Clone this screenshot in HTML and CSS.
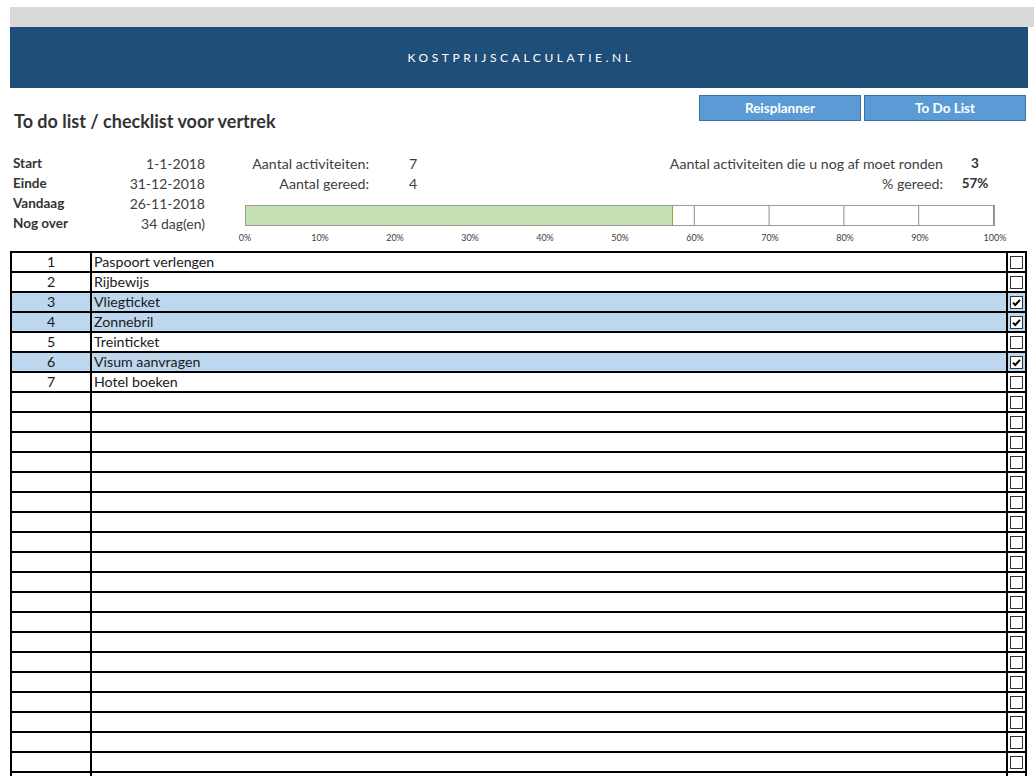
FILE: index.html
```html
<!DOCTYPE html>
<html lang="nl">
<head>
<meta charset="utf-8">
<title>To do list</title>
<link rel="stylesheet" href="styles.css">
</head>
<body>
<div class="topbar"></div>
<header class="banner">KOSTPRIJSCALCULATIE.NL</header>

<div class="subheader">
  <h1 class="title">To do list / checklist voor vertrek</h1>
  <nav class="buttons">
    <a class="btn">Reisplanner</a>
    <a class="btn">To Do List</a>
  </nav>
</div>

<section class="info">
  <div class="dates">
    <div class="lbl">Start</div><div class="val">1-1-2018</div>
    <div class="lbl">Einde</div><div class="val">31-12-2018</div>
    <div class="lbl">Vandaag</div><div class="val">26-11-2018</div>
    <div class="lbl">Nog over</div><div class="val">34 dag(en)</div>
  </div>
  <div class="progress">
    <div class="stats">
      <div class="slbl">Aantal activiteiten:</div><div class="sval">7</div>
      <div class="rlbl">Aantal activiteiten die u nog af moet ronden</div><div class="rval">3</div>
      <div class="slbl">Aantal gereed:</div><div class="sval">4</div>
      <div class="rlbl">% gereed:</div><div class="rval">57%</div>
    </div>
    <div class="chart">
      <div class="bar"><div class="fill" style="width:57.14%"></div></div>
      <div class="axis">
        <span>0%</span><span>10%</span><span>20%</span><span>30%</span><span>40%</span><span>50%</span><span>60%</span><span>70%</span><span>80%</span><span>90%</span><span>100%</span>
      </div>
    </div>
  </div>
</section>

<table class="todo">
  <colgroup><col class="c-num"><col class="c-text"><col class="c-chk"></colgroup>
  <tbody>
    <tr><td class="num">1</td><td class="txt">Paspoort verlengen</td><td class="chk"><span class="box"></span></td></tr>
    <tr><td class="num">2</td><td class="txt">Rijbewijs</td><td class="chk"><span class="box"></span></td></tr>
    <tr class="done"><td class="num">3</td><td class="txt">Vliegticket</td><td class="chk"><span class="box"><svg viewBox="0 0 11 11"><path d="M2 5.6 L4.3 8 L9 2.8" /></svg></span></td></tr>
    <tr class="done"><td class="num">4</td><td class="txt">Zonnebril</td><td class="chk"><span class="box"><svg viewBox="0 0 11 11"><path d="M2 5.6 L4.3 8 L9 2.8" /></svg></span></td></tr>
    <tr><td class="num">5</td><td class="txt">Treinticket</td><td class="chk"><span class="box"></span></td></tr>
    <tr class="done"><td class="num">6</td><td class="txt">Visum aanvragen</td><td class="chk"><span class="box"><svg viewBox="0 0 11 11"><path d="M2 5.6 L4.3 8 L9 2.8" /></svg></span></td></tr>
    <tr><td class="num">7</td><td class="txt">Hotel boeken</td><td class="chk"><span class="box"></span></td></tr>
    <tr><td class="num"></td><td class="txt"></td><td class="chk"><span class="box"></span></td></tr>
    <tr><td class="num"></td><td class="txt"></td><td class="chk"><span class="box"></span></td></tr>
    <tr><td class="num"></td><td class="txt"></td><td class="chk"><span class="box"></span></td></tr>
    <tr><td class="num"></td><td class="txt"></td><td class="chk"><span class="box"></span></td></tr>
    <tr><td class="num"></td><td class="txt"></td><td class="chk"><span class="box"></span></td></tr>
    <tr><td class="num"></td><td class="txt"></td><td class="chk"><span class="box"></span></td></tr>
    <tr><td class="num"></td><td class="txt"></td><td class="chk"><span class="box"></span></td></tr>
    <tr><td class="num"></td><td class="txt"></td><td class="chk"><span class="box"></span></td></tr>
    <tr><td class="num"></td><td class="txt"></td><td class="chk"><span class="box"></span></td></tr>
    <tr><td class="num"></td><td class="txt"></td><td class="chk"><span class="box"></span></td></tr>
    <tr><td class="num"></td><td class="txt"></td><td class="chk"><span class="box"></span></td></tr>
    <tr><td class="num"></td><td class="txt"></td><td class="chk"><span class="box"></span></td></tr>
    <tr><td class="num"></td><td class="txt"></td><td class="chk"><span class="box"></span></td></tr>
    <tr><td class="num"></td><td class="txt"></td><td class="chk"><span class="box"></span></td></tr>
    <tr><td class="num"></td><td class="txt"></td><td class="chk"><span class="box"></span></td></tr>
    <tr><td class="num"></td><td class="txt"></td><td class="chk"><span class="box"></span></td></tr>
    <tr><td class="num"></td><td class="txt"></td><td class="chk"><span class="box"></span></td></tr>
    <tr><td class="num"></td><td class="txt"></td><td class="chk"><span class="box"></span></td></tr>
    <tr><td class="num"></td><td class="txt"></td><td class="chk"><span class="box"></span></td></tr>
    <tr><td class="num"></td><td class="txt"></td><td class="chk"><span class="box"></span></td></tr>
  </tbody>
</table>
</body>
</html>
```

FILE: styles.css
```css
html, body {
  margin: 0;
  padding: 0;
  background: #ffffff;
}
body {
  height: 776px;
  overflow: hidden;
  font-family: "Lato", "Open Sans", sans-serif;
  color: #404040;
  font-size: 14px;
}
.topbar {
  margin: 7px 0 0 10px;
  height: 20px;
  background: #d9d9d9;
}
.banner {
  margin: 0 6px 0 10px;
  height: 61px;
  background: #1f4e79;
  color: #ffffff;
  display: flex;
  align-items: center;
  justify-content: center;
  font-size: 12px;
  letter-spacing: 3.6px;
  padding-left: 4px;
  box-sizing: border-box;
}
.subheader {
  display: flex;
  justify-content: space-between;
  height: 65px;
  padding: 7px 8px 0 14px;
  box-sizing: border-box;
}
.title {
  margin: 16px 0 0 0;
  font-size: 18px;
  font-weight: bold;
  color: #333333;
  line-height: 20px;
}
.buttons {
  display: flex;
  gap: 3px;
  height: 26px;
}
.btn {
  width: 162px;
  box-sizing: border-box;
  background: #5b9bd5;
  border: 1px solid #41719c;
  color: #ffffff;
  font-weight: bold;
  font-size: 13.5px;
  display: flex;
  align-items: center;
  justify-content: center;
}
.info {
  display: flex;
  height: 98px;
}
.dates {
  margin-left: 13px;
  width: 192px;
  display: grid;
  grid-template-columns: 90px 102px;
  grid-auto-rows: 20px;
  align-items: center;
}
.lbl {
  font-weight: bold;
  font-size: 13.5px;
  color: #333333;
}
.val {
  text-align: right;
  font-size: 14px;
}
.progress {
  margin-left: 40px;
  flex: 1;
}
.stats {
  display: grid;
  grid-template-columns: 124px 70px 504px 64px;
  grid-auto-rows: 20px;
  align-items: center;
  font-size: 14.2px;
}
.slbl, .rlbl {
  text-align: right;
}
.sval {
  padding-left: 40px;
}
.rval {
  text-align: center;
  font-weight: bold;
  font-size: 13.5px;
  color: #333333;
}
.chart {
  margin-top: 12px;
  width: 750px;
}
.bar {
  height: 21px;
  box-sizing: border-box;
  border: 1px solid #9a9a9a;
  background-image: linear-gradient(to right, #8c8c8c 1px, transparent 1px);
  background-size: 10% 100%;
  background-position: -1px 0;
}
.fill {
  height: 100%;
  box-sizing: border-box;
  background: #c5e0b4;
  border-right: 1px solid #a69b3c;
}
.axis {
  display: flex;
  margin-left: -37.5px;
  width: 825px;
  margin-top: 6px;
  font-size: 9px;
  color: #404040;
}
.axis span {
  flex: 1;
  text-align: center;
}
.todo {
  margin-left: 10px;
  width: 1017px;
  border-collapse: collapse;
  table-layout: fixed;
  font-size: 14.2px;
  color: #1a1a1a;
}
.c-num { width: 80px; }
.c-chk { width: 19px; }
.todo td {
  border: 2px solid #000;
  height: 18px;
  padding: 0;
  line-height: 18px;
  white-space: nowrap;
  overflow: hidden;
}
.todo .num {
  text-align: center;
}
.todo .txt {
  padding-left: 2px;
}
.todo tr.done td {
  background: #bdd7ee;
}
.todo .chk {
  text-align: center;
  vertical-align: middle;
}
.box {
  display: inline-block;
  width: 13px;
  height: 13px;
  box-sizing: border-box;
  border: 1px solid #333;
  background: #fff;
  vertical-align: middle;
  margin-top: -2px;
}
.box svg {
  display: block;
  width: 11px;
  height: 11px;
}
.box path {
  fill: none;
  stroke: #000;
  stroke-width: 2;
}
```
